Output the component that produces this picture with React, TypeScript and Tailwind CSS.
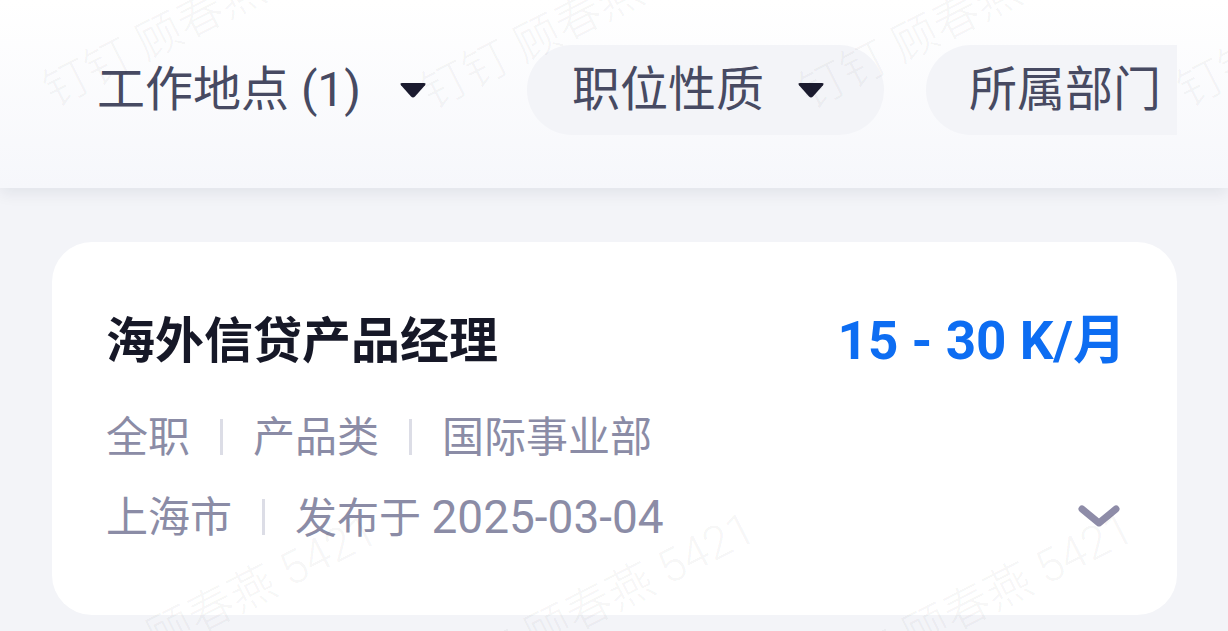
const Caret = () => (
  <svg width="28" height="18" viewBox="0 0 28 18" className="shrink-0">
    <path d="M3 2 H25 Q27.5 2 26 4.2 L16 15.5 Q14 17.5 12 15.5 L2 4.2 Q0.5 2 3 2 Z" fill="#1b1b2f" />
  </svg>
);

const Chevron = () => (
  <svg width="44" height="26" viewBox="0 0 44 26" className="mr-[5px]">
    <polyline
      points="5,5 22,19 39,5"
      fill="none"
      stroke="#8e8ca8"
      strokeWidth="7"
      strokeLinecap="round"
      strokeLinejoin="round"
    />
  </svg>
);

const Sep = () => <span className="mx-[30px] inline-block h-[36px] w-[3px] bg-[#dcdde6]" />;

// watermark tiles: baseline start points
const marks = [
  { x: 57, y: 114 },
  { x: 435, y: 116 },
  { x: 813, y: 116 },
  { x: 1191, y: 114 },
  { x: 68, y: 708 },
  { x: 446, y: 706 },
  { x: 824, y: 706 },
];

const Watermark = () => (
  <div className="pointer-events-none absolute inset-0 z-20 overflow-hidden">
    {marks.map((m, i) => (
      <span
        key={i}
        className="absolute origin-bottom-left -rotate-[27deg] whitespace-nowrap text-[46px] font-light leading-none text-black/[0.05]"
        style={{ left: m.x, top: m.y - 46 }}
      >
        钉钉 顾春燕 5421
      </span>
    ))}
  </div>
);

export default function App() {
  return (
    <div
      className="relative h-[631px] w-[1228px] overflow-hidden bg-[#f3f4f8]"
      style={{ fontFamily: 'Roboto, "Noto Sans CJK SC", sans-serif' }}
    >
      <header className="relative z-10 h-[188px] bg-gradient-to-b from-white to-[#f6f7fb] shadow-[0_6px_14px_rgba(20,25,60,0.07)]">
        <div className="ml-[53px] flex w-[1124px] gap-[42px] overflow-hidden pt-[45px]">
          <div className="flex h-[90px] shrink-0 items-center gap-[38px] rounded-full pl-[44px] pr-[58px] text-[48px] text-[#474a62]">
            <span>工作地点 (1)</span>
            <Caret />
          </div>
          <div className="flex h-[90px] shrink-0 items-center gap-[33px] rounded-full bg-[#f3f4f8] pl-[45px] pr-[59px] text-[48px] text-[#474a62]">
            <span>职位性质</span>
            <Caret />
          </div>
          <div className="flex h-[90px] shrink-0 items-center gap-[33px] rounded-full bg-[#f3f4f8] pl-[43px] pr-[59px] text-[48px] text-[#474a62]">
            <span>所属部门</span>
            <Caret />
          </div>
        </div>
      </header>

      <div className="px-[52px] pt-[54px]">
        <div className="w-[1125px] rounded-[40px] bg-white pb-[70px] pl-[54px] pr-[51px] pt-[68px]">
          <div className="flex h-[64px] items-center justify-between">
            <h2 className="text-[49px] font-bold text-[#161827]">海外信贷产品经理</h2>
            <span className="text-[53px] font-bold text-[#0d6df2]">15 - 30 K/月</span>
          </div>
          <div className="mt-[35px] flex h-[56px] items-center text-[42px] text-[#8b8ca6]">
            <span>全职</span>
            <Sep />
            <span>产品类</span>
            <Sep />
            <span>国际事业部</span>
          </div>
          <div className="mt-[24px] flex h-[56px] items-center justify-between text-[42px] text-[#8b8ca6]">
            <div className="flex items-center">
              <span>上海市</span>
              <Sep />
              <span>
                发布于 <span className="text-[46px]">2025-03-04</span>
              </span>
            </div>
            <Chevron />
          </div>
        </div>
      </div>

      <Watermark />
    </div>
  );
}
